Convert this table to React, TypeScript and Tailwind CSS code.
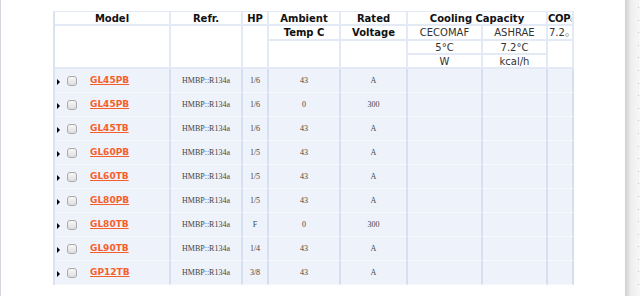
import type { ReactNode } from "react";

type Row = {
  model: string;
  refr: string;
  hp: string;
  ambient: string;
  voltage: string;
};

const rows: Row[] = [
  { model: "GL45PB", refr: "HMBP::R134a", hp: "1/6", ambient: "43", voltage: "A" },
  { model: "GL45PB", refr: "HMBP::R134a", hp: "1/6", ambient: "0", voltage: "300" },
  { model: "GL45TB", refr: "HMBP::R134a", hp: "1/6", ambient: "43", voltage: "A" },
  { model: "GL60PB", refr: "HMBP::R134a", hp: "1/5", ambient: "43", voltage: "A" },
  { model: "GL60TB", refr: "HMBP::R134a", hp: "1/5", ambient: "43", voltage: "A" },
  { model: "GL80PB", refr: "HMBP::R134a", hp: "1/5", ambient: "43", voltage: "A" },
  { model: "GL80TB", refr: "HMBP::R134a", hp: "F", ambient: "0", voltage: "300" },
  { model: "GL90TB", refr: "HMBP::R134a", hp: "1/4", ambient: "43", voltage: "A" },
  { model: "GP12TB", refr: "HMBP::R134a", hp: "3/8", ambient: "43", voltage: "A" },
];

const cols = "grid-cols-[116px_72px_26px_72px_67px_75px_65px_26px]";

function H({
  className = "",
  children,
}: {
  className?: string;
  children?: ReactNode;
}) {
  return (
    <div
      className={`flex items-center justify-center overflow-hidden whitespace-nowrap border-r-2 border-b-2 border-[#e4eaf5] ${className}`}
    >
      {children}
    </div>
  );
}

function Tiny() {
  return (
    <span className="mt-[4px] inline-block h-[4px] w-[4px] shrink-0 rounded-full border border-[#b8b8b8]" />
  );
}

function Cell({ children }: { children?: ReactNode }) {
  return (
    <div className="flex items-center justify-center border-r-2 border-b border-r-[#d6dfef] border-b-[#f4f7fc] text-[8px] text-[#444]">
      {children}
    </div>
  );
}

function App() {
  return (
    <div className="flex h-[296px] w-[640px] overflow-hidden bg-white">

      <div className="w-px shrink-0 bg-[#d5d5dd]" />

      <div className="flex-1 pl-[52px] pt-[11px]">

        <div className="w-[521px] border-l-2 border-t border-[#e4eaf5] border-l-[#dbe3f1]">

          <div
            className={`grid ${cols} grid-rows-[14px_15px_14px_14px] bg-white text-[10px] font-bold text-[#111]`}
            style={{ fontFamily: '"DejaVu Sans", Verdana, sans-serif' }}
          >
            <H className="col-start-1 row-start-1">Model</H>
            <H className="col-start-1 row-start-2 row-span-3" />

            <H className="col-start-2 row-start-1">Refr.</H>
            <H className="col-start-2 row-start-2 row-span-3" />

            <H className="col-start-3 row-start-1">HP</H>
            <H className="col-start-3 row-start-2 row-span-3" />

            <H className="col-start-4 row-start-1">Ambient</H>
            <H className="col-start-4 row-start-2">Temp C</H>
            <H className="col-start-4 row-start-3 row-span-2" />

            <H className="col-start-5 row-start-1">Rated</H>
            <H className="col-start-5 row-start-2">Voltage</H>
            <H className="col-start-5 row-start-3 row-span-2" />

            <H className="col-start-6 col-span-2 row-start-1">Cooling Capacity</H>
            <H className="col-start-6 row-start-2 font-normal text-[#333]">CECOMAF</H>
            <H className="col-start-7 row-start-2 font-normal text-[#333]">ASHRAE</H>
            <H className="col-start-6 row-start-3 font-normal text-[#333]">5°C</H>
            <H className="col-start-7 row-start-3 font-normal text-[#333]">7.2°C</H>
            <H className="col-start-6 row-start-4 font-normal text-[#333]">W</H>
            <H className="col-start-7 row-start-4 font-normal text-[#333]">kcal/h</H>

            <H className="col-start-8 row-start-1 justify-start tracking-[-0.3px]">
              COP<Tiny />
            </H>
            <H className="col-start-8 row-start-2 justify-start pl-[1px] font-normal text-[#333]">
              7.2<Tiny />
            </H>
            <H className="col-start-8 row-start-3 row-span-2" />
          </div>

          {rows.map((row, i) => (
            <div
              key={i}
              className={`grid ${cols} h-[24px] bg-[#eef2fa]`}
              style={{ fontFamily: '"Liberation Serif", "Times New Roman", serif' }}
            >
              <div className="flex items-center border-r-2 border-b border-r-[#d6dfef] border-b-[#f4f7fc]">
                <span className="ml-[2px] mt-[3px] h-0 w-0 border-y-[3px] border-l-[3px] border-y-transparent border-l-black" />
                <span className="ml-[7px] h-[10px] w-[10px] rounded-[3px] border border-[#a9a9a9] bg-linear-to-b from-[#f7f7f7] to-[#dedede]" />
                <a
                  href="#"
                  className="ml-[13px] text-[9px] font-bold text-[#f55f2b] underline"
                  style={{ fontFamily: '"DejaVu Sans", Verdana, sans-serif' }}
                >
                  {row.model}
                </a>
              </div>
              <Cell>{row.refr}</Cell>
              <Cell>{row.hp}</Cell>
              <Cell>{row.ambient}</Cell>
              <Cell>{row.voltage}</Cell>
              <Cell />
              <Cell />
              <Cell />
            </div>
          ))}

        </div>

      </div>

      <div className="relative w-[15px] shrink-0 bg-linear-to-r from-[#cfcfd4] via-[#eeeeee] via-40% to-[#f7f7f7]">
        <div className="absolute left-[13px] top-[7px] flex flex-col gap-[11.6px]">
          {Array.from({ length: 23 }).map((_, i) => (
            <span key={i} className="block h-px w-px bg-[#c4c4c4]" />
          ))}
        </div>
      </div>

    </div>
  );
}

export default App;
